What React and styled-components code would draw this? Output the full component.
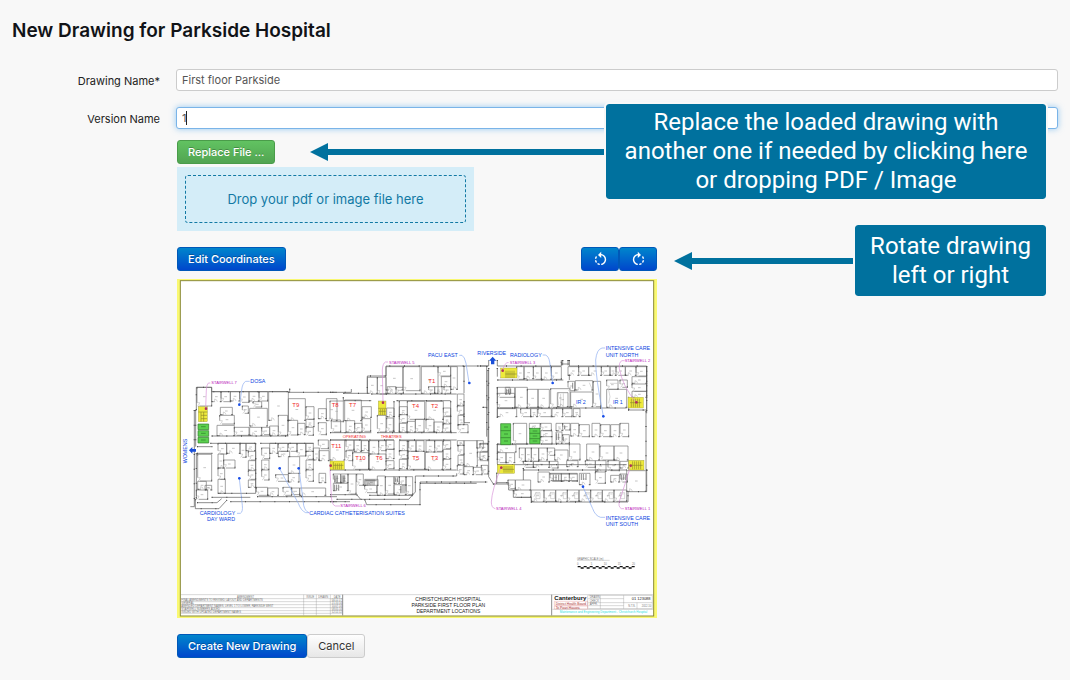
import React, { useState } from "react";
import styled, { createGlobalStyle } from "styled-components";
import { MdRotateLeft, MdRotateRight } from "react-icons/md";

// rooms are [x, y, width, height], three plan units to one pixel
const westRooms = [
  [60, 142, 44, 56],
  [104, 155, 28, 30],
  [132, 155, 28, 30],
  [160, 155, 28, 28],
  [188, 155, 28, 32],
  [216, 155, 30, 28],
  [246, 155, 26, 28],
  [275, 155, 59, 86],
  [228, 185, 26, 16],
  [130, 202, 36, 22],
  [128, 226, 44, 26],
  [120, 256, 52, 31],
  [172, 262, 44, 24],
  [218, 205, 53, 53],
  [196, 198, 18, 22],
  [218, 262, 36, 24],
  [254, 262, 24, 22],
  [278, 258, 26, 28],
  [304, 226, 28, 60],
  [334, 176, 51, 65],
  [334, 241, 28, 44],
  [362, 250, 22, 34],
  [387, 200, 24, 38],
  [387, 238, 24, 22],
  [387, 262, 22, 24],
  [424, 206, 24, 30],
  [424, 248, 24, 36],
  [448, 176, 32, 66],
  [62, 343, 42, 80],
  [62, 424, 26, 24],
  [58, 450, 34, 28],
  [84, 436, 20, 14],
  [123, 310, 26, 32],
  [149, 310, 40, 30],
  [189, 310, 18, 42],
  [207, 310, 28, 22],
  [140, 360, 34, 24],
  [123, 342, 17, 42],
  [123, 384, 20, 34],
  [123, 418, 22, 42],
  [214, 334, 22, 26],
  [214, 362, 22, 28],
  [214, 392, 22, 26],
  [214, 420, 22, 22],
  [254, 324, 24, 32],
  [254, 360, 22, 28],
  [254, 390, 22, 30],
  [278, 310, 24, 30],
  [304, 310, 28, 24],
  [304, 334, 34, 16],
  [334, 310, 26, 24],
  [334, 350, 34, 50],
  [360, 310, 26, 38],
  [387, 310, 22, 24],
  [387, 334, 22, 24],
  [387, 360, 22, 28],
  [387, 390, 22, 34],
  [409, 324, 18, 36],
  [296, 404, 38, 20],
  [334, 400, 32, 26],
  [238, 442, 34, 24],
  [272, 444, 32, 22],
  [318, 442, 26, 24],
  [368, 444, 78, 22],
  [344, 444, 24, 20],
  [426, 400, 20, 28],
  [424, 300, 30, 26],
  [426, 332, 30, 30],
];

const middleRooms = [
  [0, 183, 40, 62],
  [44, 180, 50, 62],
  [4, 240, 28, 36],
  [48, 242, 26, 34],
  [74, 250, 22, 26],
  [96, 200, 28, 32],
  [96, 236, 26, 38],
  [112, 112, 30, 48],
  [142, 112, 26, 50],
  [168, 80, 50, 70],
  [220, 80, 50, 72],
  [274, 80, 50, 80],
  [324, 80, 38, 28],
  [334, 110, 28, 30],
  [296, 140, 18, 20],
  [314, 140, 22, 20],
  [342, 140, 20, 20],
  [172, 140, 26, 20],
  [198, 142, 22, 18],
  [362, 80, 20, 68],
  [142, 226, 26, 50],
  [170, 204, 22, 26],
  [170, 234, 20, 40],
  [208, 200, 24, 24],
  [208, 224, 24, 24],
  [208, 250, 22, 26],
  [232, 184, 52, 54],
  [232, 244, 24, 32],
  [256, 238, 26, 38],
  [288, 184, 52, 54],
  [288, 238, 24, 38],
  [312, 246, 26, 30],
  [340, 204, 22, 24],
  [340, 230, 22, 20],
  [340, 252, 22, 24],
  [382, 162, 20, 34],
  [382, 198, 20, 26],
  [384, 226, 18, 28],
  [384, 254, 30, 24],
  [0, 300, 44, 60],
  [48, 300, 24, 30],
  [72, 300, 22, 34],
  [48, 332, 20, 30],
  [94, 302, 22, 30],
  [68, 338, 48, 50],
  [118, 302, 28, 40],
  [146, 302, 22, 30],
  [118, 342, 50, 46],
  [168, 300, 24, 28],
  [168, 328, 24, 28],
  [168, 362, 24, 24],
  [208, 302, 26, 30],
  [208, 332, 26, 24],
  [208, 358, 24, 28],
  [236, 302, 22, 32],
  [258, 302, 24, 32],
  [234, 334, 50, 54],
  [288, 302, 26, 34],
  [314, 302, 24, 32],
  [286, 336, 52, 52],
  [340, 302, 22, 24],
  [340, 328, 22, 28],
  [340, 358, 22, 30],
  [382, 302, 20, 14],
  [384, 316, 18, 28],
  [384, 346, 18, 28],
  [382, 376, 18, 26],
  [402, 380, 28, 24],
  [430, 382, 26, 22],
  [440, 302, 20, 22],
  [442, 336, 32, 26],
  [402, 302, 40, 76],
  [10, 402, 22, 26],
  [32, 402, 22, 26],
  [54, 402, 24, 60],
  [10, 430, 44, 22],
  [80, 402, 20, 34],
  [104, 418, 40, 18],
  [104, 436, 36, 22],
  [142, 408, 24, 58],
  [166, 410, 26, 52],
  [192, 410, 16, 20],
  [208, 410, 20, 26],
  [192, 434, 36, 30],
  [228, 410, 20, 54],
];

const eastRooms = [
  [110, 80, 22, 38],
  [132, 80, 28, 36],
  [160, 80, 24, 38],
  [184, 80, 30, 38],
  [214, 80, 30, 38],
  [264, 80, 32, 26],
  [296, 80, 30, 26],
  [326, 80, 38, 26],
  [364, 80, 26, 26],
  [390, 80, 18, 26],
  [408, 80, 28, 26],
  [436, 80, 32, 26],
  [468, 80, 32, 28],
  [456, 110, 44, 20],
  [456, 132, 44, 22],
  [456, 154, 44, 18],
  [52, 142, 52, 30],
  [76, 142, 14, 20],
  [52, 160, 52, 44],
  [106, 142, 36, 60],
  [142, 148, 32, 54],
  [174, 148, 34, 54],
  [212, 146, 58, 56],
  [232, 158, 32, 42],
  [264, 124, 20, 28],
  [286, 122, 52, 28],
  [340, 124, 22, 76],
  [272, 156, 66, 44],
  [380, 120, 34, 28],
  [380, 148, 60, 54],
  [420, 120, 22, 22],
  [52, 206, 58, 24],
  [122, 206, 30, 24],
  [152, 206, 20, 24],
  [174, 206, 40, 24],
  [216, 206, 32, 24],
  [248, 206, 28, 24],
  [280, 206, 20, 24],
  [182, 250, 32, 22],
  [182, 272, 34, 18],
  [182, 290, 34, 22],
  [148, 250, 32, 16],
  [100, 250, 40, 62],
  [228, 250, 20, 22],
  [248, 250, 22, 20],
  [228, 276, 18, 34],
  [248, 284, 20, 26],
  [272, 250, 24, 38],
  [298, 254, 30, 36],
  [336, 250, 24, 40],
  [362, 254, 28, 36],
  [392, 254, 26, 36],
  [420, 250, 26, 40],
  [52, 314, 56, 22],
  [52, 338, 26, 30],
  [78, 338, 26, 30],
  [118, 324, 18, 40],
  [136, 324, 18, 40],
  [154, 324, 22, 40],
  [176, 324, 26, 36],
  [202, 324, 22, 22],
  [224, 330, 40, 30],
  [268, 312, 32, 48],
  [320, 312, 38, 48],
  [360, 318, 42, 42],
  [402, 318, 42, 42],
  [130, 364, 30, 18],
  [160, 364, 48, 18],
  [208, 364, 26, 20],
  [260, 362, 34, 18],
  [316, 362, 30, 20],
  [346, 362, 32, 32],
  [384, 362, 34, 30],
  [420, 364, 26, 20],
  [210, 400, 34, 24],
  [244, 400, 24, 24],
  [268, 400, 24, 24],
  [298, 400, 32, 34],
  [346, 396, 30, 34],
  [392, 406, 26, 20],
  [420, 402, 22, 24],
  [174, 396, 34, 30],
  [84, 420, 22, 26],
  [106, 420, 46, 30],
  [102, 450, 50, 22],
  [154, 450, 38, 34],
  [192, 450, 35, 34],
  [227, 450, 35, 34],
  [262, 450, 35, 34],
  [297, 450, 35, 34],
  [332, 450, 35, 34],
  [367, 450, 35, 34],
  [402, 450, 38, 34],
  [440, 392, 58, 62],
  [0, 310, 24, 24],
  [0, 336, 24, 22],
  [4, 376, 20, 26],
];

const bays = [162, 206, 244, 278, 312, 348, 382, 416];

const roomWalls = (rooms) =>
  rooms
    .map(([x, y, w, h], i) =>
      i % 2
        ? `M${x + 9} ${y + h}H${x}V${y}H${x + w}V${y + h}H${x + w - 4}`
        : `M${x} ${y + h - 10}V${y}H${x + w}V${y + h}H${x + 7}`
    )
    .join("");

const roomDoors = (rooms) =>
  rooms
    .map(([x, y, w, h], i) =>
      i % 2
        ? `M${x + 9} ${y + h}v-8q7 1 8 8`
        : `M${x} ${y + h - 10}h8q-1 8 -7 10`
    )
    .join("");

const roomTags = (rooms) =>
  rooms
    .map(([x, y, w, h]) => `M${x + w / 2 - 4} ${y + h / 2}h8`)
    .join("");

const roomPosts = (rooms) =>
  rooms
    .map(([x, y, w, h], i) =>
      i % 2
        ? `M${x - 1} ${y + h}h5M${x + w - 3} ${y + h}h5`
        : `M${x + w} ${y + h - 4}v6M${x} ${y - 1}v5`
    )
    .join("");

const Rooms = ({ rooms }) => (
  <>
    <Wall d={roomWalls(rooms)} />
    <Door d={roomDoors(rooms)} />
    <Tag d={roomTags(rooms)} />
    <Post d={roomPosts(rooms)} />
  </>
);

const Shell = ({ d }) => (
  <>
    <Outer d={d} />
    <Columns d={d} />
  </>
);

const WestWing = () => (
  <g>
    <Rooms rooms={westRooms} />
    <Shell d="M58 210V142H104V155H334M334 157H480M338 146V157M52 210V500H40M56 210V320M58 340V478M55 478V506H126L150 480M60 488H120L134 476M104 472H220M160 485H480M240 470H480M100 310H236M250 310H410M104 288H334M60 320H106M60 340H106M236 310V460H123" />
    <Stair x="64" y="200" width="27" height="45" />
    <StairLine d="M64 216h27M72 216v29M80 216v29M72 226h18M72 236h18" />
    <Lift d="M63 252h32v17h-32zM63 272h32v17h-32zM63 292h32v17h-32z" />
    <LiftLine d="M63 252h32v17h-32zM63 272h32v17h-32zM63 292h32v17h-32zM72 260h14M72 280h14M72 300h14" />
    <Leader d="M218 124H206Q196 130 194 150L188 194M180 520H190Q198 516 196 496L187 416M396 518H386Q372 512 364 490L308 386M396 518Q384 514 380 496L366 386" />
    <StairLeader d="M100 129H94Q89 134 88 150L86 204" />
    <Dot cx="187" cy="194" r="4" />
    <Dot cx="187" cy="415" r="4" />
    <Dot cx="308" cy="385" r="4" />
    <Dot cx="365" cy="385" r="4" />
    <StairDot cx="87" cy="206" r="4" />
    <Arrow d="M36 331l10-10v6h11v8h-11v6z" />
    <Department x="220" y="129">DOSA</Department>
    <Department x="68" y="525">CARDIOLOGY</Department>
    <Department x="90" y="543">DAY WARD</Department>
    <Department x="0" y="0" transform="translate(31 370) rotate(-90)">
      WOMENS
    </Department>
    <Stairwell x="103" y="133">STAIRWELL 7</Stairwell>
    <Theatre x="346" y="200">T9</Theatre>
  </g>
);

const MiddleWing = () => (
  <g transform="translate(459 0)">
    <Rooms rooms={middleRooms} />
    <Shell d="M0 157H64V147M40 160H112V108H168V78H474M402 78V160M402 184V248H420M470 78V202H456M470 202V290M124 162H380M40 172V182H124M200 182H362M0 278H124M142 278H380M0 300H116M118 300H192M208 300H380M0 390H116M118 390H380M0 464H80M80 464L92 478H236L256 456V408H380V400M0 485H60M104 478L110 494H270V426H472M20 478H96M118 466H248M270 430H440M362 184V278M208 184V278M192 184V278M116 302V390M232 302V390" />
    <Hatch d="M14 406v22M18 406v22M22 406v22M36 406v22M40 406v22M44 406v22M106 422h34M108 418v18M114 418v18M120 418v18M126 418v18M132 418v18M196 412v14M202 412v14M212 438v22M216 438v22M222 438v22M14 434v18M20 434v18M26 434v18" />
    <Stair x="145" y="183" width="23" height="42" />
    <StairLine d="M145 205h23M151 207v18M157 207v18M163 207v18M147 214h20" />
    <Stair x="0" y="363" width="43" height="26" />
    <StairLine d="M10 366v22M16 370v18M22 370v18M28 370v18M34 370v18M10 376h30" />
    <StairLeader d="M174 66H166Q158 70 157 90L159 188M0 388L4 470Q6 496 16 498H30" />
    <Leader d="M388 46H396Q404 50 408 70L417 128" />
    <Dot cx="418" cy="129" r="4" />
    <StairDot cx="159" cy="188" r="4" />
    <StairDot cx="2" cy="377" r="4" />
    <Department x="294" y="51">PACU EAST</Department>
    <Department x="-62" y="525">CARDIAC CATHETERISATION SUITES</Department>
    <Stairwell x="177" y="71">STAIRWELL 5</Stairwell>
    <Stairwell x="31" y="502">STAIRWELL 6</Stairwell>
    <Theatre x="5" y="202">T8</Theatre>
    <Theatre x="57" y="202">T7</Theatre>
    <Theatre x="246" y="205">T4</Theatre>
    <Theatre x="303" y="205">T2</Theatre>
    <Theatre x="295" y="129">T1</Theatre>
    <Theatre x="4" y="324">T11</Theatre>
    <Theatre x="76" y="359">T10</Theatre>
    <Theatre x="137" y="359">T6</Theatre>
    <Theatre x="247" y="359">T5</Theatre>
    <Theatre x="303" y="359">T3</Theatre>
    <Suite x="38" y="294">OPERATING</Suite>
    <Suite x="152" y="294">THEATRES</Suite>
  </g>
);

const EastWing = () => (
  <g transform="translate(909 0)">
    <Rooms rooms={eastRooms} />
    <Shell d="M0 78H26V60M52 60V78H244V60M268 60V78H500V210M248 60V76M264 60V76M244 72H268M500 78V220M498 214V390H504M500 390V455H444V486H154V472H100V450H86V428H50M26 84V410L40 432H84M52 84V110M52 120H250M52 142V234M52 204H440M444 210H498M52 312H268M24 312H0M52 312V372M52 374H440M130 390H440M24 90V330M446 210V170M268 104V120M130 384V420M50 398V432" />
    <Hatch d="M212 402h80M212 422h80M220 404v18M228 404v18M236 404v18M80 146v14M86 146v14M92 146v14M304 402v18M310 402v18M318 402v18M424 404v16M430 404v16M436 404v16M278 128v18M230 280v20M236 280v20M254 256v12M250 290v14" />
    <Thin d="M236 158Q230 172 236 196M242 162v36M250 160v40M328 128l10 24M390 130h22M386 150q8 20 0 40" />
    <Stair x="62" y="84" width="49" height="30" />
    <StairLine d="M78 92v22M84 92v22M90 92v22M96 92v22M102 92v22M76 102h34" />
    <Stair x="444" y="172" width="46" height="32" />
    <StairLine d="M454 176v26M460 176v26M466 176v26M472 176v26M478 176v26M450 188h34" />
    <Stair x="52" y="374" width="52" height="26" />
    <StairLine d="M72 378v20M78 378v20M84 378v20M90 378v20M96 378v20M68 388h34" />
    <Stair x="446" y="361" width="46" height="29" />
    <StairLine d="M458 364v24M464 364v24M470 364v24M476 364v24M482 364v24M452 376h36" />
    <Lift d="M62 251h30v63h-30zM149 265h31v46h-31z" />
    <LiftLine d="M62 251h30v63h-30zM62 272h30M62 293h30M149 265h31v46h-31zM149 280h31M149 296h31M72 261h12M72 282h12M72 303h12M158 273h14M158 288h14M158 303h14" />
    {bays.map((x) => (
      <Thin
        key={x}
        d={`M${x + 6} 458h12v18h-12zM${x} 470q6-14 6-14M${x + 9} 462h6`}
      />
    ))}
    <Leader d="M188 45H196Q206 48 209 66L218 128M375 24H366Q350 28 347 60Q346 110 370 228M375 532H362Q346 528 338 506L309 441" />
    <StairLeader d="M86 68H80Q72 74 68 90M434 62H426Q416 66 418 86Q428 140 468 186M46 506Q34 504 34 486Q36 450 62 384M432 506H424Q414 500 418 484Q436 430 452 378" />
    <Dot cx="218" cy="129" r="4" />
    <Dot cx="370" cy="229" r="4" />
    <Dot cx="309" cy="440" r="4" />
    <StairDot cx="68" cy="92" r="4" />
    <StairDot cx="469" cy="187" r="4" />
    <StairDot cx="64" cy="383" r="4" />
    <StairDot cx="452" cy="377" r="4" />
    <Arrow d="M38 50l11 12h-6v11h-10v-11h-6z" />
    <Department x="-8" y="44">RIVERSIDE</Department>
    <Department x="90" y="51">RADIOLOGY</Department>
    <Department x="377" y="31">INTENSIVE CARE</Department>
    <Department x="377" y="50">UNIT NORTH</Department>
    <Department x="377" y="539">INTENSIVE CARE</Department>
    <Department x="377" y="558">UNIT SOUTH</Department>
    <Department x="288" y="192">IR 2</Department>
    <Department x="399" y="192">IR 1</Department>
    <Stairwell x="89" y="72">STAIRWELL 3</Stairwell>
    <Stairwell x="434" y="66">STAIRWELL 2</Stairwell>
    <Stairwell x="48" y="511">STAIRWELL 4</Stairwell>
    <Stairwell x="434" y="511">STAIRWELL 1</Stairwell>
  </g>
);

const TitleBlock = () => (
  <g>
    <g transform="translate(669 600)">
      <Note x="531" y="59">GRAPHIC SCALE (m)</Note>
      <Thin d="M531 61h98" />
      <Note x="531" y="75">0</Note>
      <Note x="572" y="75">5</Note>
      <Note x="611" y="75">10</Note>
      <Note x="653" y="75">15</Note>
      <Note x="696" y="75">20</Note>
      <ScaleBar d="M533 80h9M551 80h9M569 80h9M587 80h9M605 80h9M623 80h9M641 80h9M659 80h9M677 80h9M695 80h9M542 84h9M560 84h9M578 84h9M596 84h9M614 84h9M632 84h9M650 84h9M668 84h9M686 84h9" />
    </g>
    <Thin d="M10 764H1430" />
    <Thin d="M10 776H496M10 785H496M10 794H496M10 803H496M10 812H496M10 820H496M380 764V826M418 764V826M460 764V826" />
    <Outer d="M497 764V826M1124 764V826" />
    <Note x="180" y="773">AMENDMENT</Note>
    <Note x="388" y="773">ISSUE</Note>
    <Note x="424" y="773">DRAWN</Note>
    <Note x="470" y="773">DATE</Note>
    <Note x="13" y="783">FINAL AMENDMENTS TO REVISED LAYOUT AND DEPARTMENTS</Note>
    <Note x="13" y="792">GENERAL</Note>
    <Note x="13" y="801">
      AMENDED DEPARTMENT NAMES, LEVEL 1 TO LOWER, PARKSIDE WEST
    </Note>
    <Note x="13" y="810">STAIRWELL NUMBERS ADDED</Note>
    <Note x="13" y="819">ISSUED WITH UPDATED DEPARTMENT NAMES</Note>
    <Note x="464" y="783">04.12.17</Note>
    <Note x="464" y="792">21.10.14</Note>
    <Note x="464" y="801">10.07.14</Note>
    <Note x="464" y="810">08.05.14</Note>
    <Note x="464" y="819">12.12.12</Note>
    <SheetName x="814" y="783">CHRISTCHURCH HOSPITAL</SheetName>
    <SheetName x="814" y="802">PARKSIDE FIRST FLOOR PLAN</SheetName>
    <SheetName x="814" y="820">DEPARTMENT LOCATIONS</SheetName>
    <Thin d="M1232 766V806M1234 766H1426V806H1234M1340 766V806M1234 776H1340M1234 788H1426M1234 797H1340M1270 766V806M1380 788V806M1126 808H1428" />
    <Board x="1132" y="779">Canterbury</Board>
    <BoardBox d="M1132 784h100v12h-100zM1132 798h100v9h-100z" />
    <BoardNote x="1136" y="794">District Health Board</BoardNote>
    <BoardNote x="1136" y="806">Te Poari Hauora</BoardNote>
    <SheetNo x="1364" y="780">01 123088</SheetNo>
    <Note x="1354" y="800">N.T.S.</Note>
    <Note x="1394" y="800">2012.10</Note>
    <Note x="1238" y="774">DRAWN</Note>
    <Note x="1238" y="785">CHECK</Note>
    <Note x="1238" y="796">APPR.</Note>
    <Engineering x="1148" y="820">
      Maintenance and Engineering Department - Christchurch Hospital
    </Engineering>
  </g>
);

const App = () => {
  const [formData, setFormData] = useState({
    drawing: "First floor Parkside",
    version: "1",
  });

  return (
    <>
      <GlobalStyle />
      <Page>
        <Heading>New Drawing for Parkside Hospital</Heading>
        <Form onSubmit={(e) => e.preventDefault()}>
          <Field>
            <Label htmlFor="drawing">Drawing Name*</Label>
            <StyledInput
              id="drawing"
              type="text"
              value={formData.drawing}
              onChange={(e) =>
                setFormData({ ...formData, drawing: e.target.value })
              }
            />
          </Field>
          <Field>
            <Label htmlFor="version">Version Name</Label>
            <InputHolder>
              <StyledInput
                id="version"
                type="text"
                $active
                value={formData.version}
                onChange={(e) =>
                  setFormData({ ...formData, version: e.target.value })
                }
              />
              <Caret />
            </InputHolder>
          </Field>
          <Body>
            <Button type="button" $kind="success">
              Replace File ...
            </Button>
            <DropZone>
              <DropTarget>Drop your pdf or image file here</DropTarget>
            </DropZone>
            <Toolbar>
              <Button type="button" $kind="primary">
                Edit Coordinates
              </Button>
              <ButtonGroup>
                <IconButton
                  type="button"
                  $kind="primary"
                  aria-label="Rotate left"
                >
                  <MdRotateLeft size={17} />
                </IconButton>
                <IconButton
                  type="button"
                  $kind="primary"
                  aria-label="Rotate right"
                >
                  <MdRotateRight size={17} />
                </IconButton>
              </ButtonGroup>
            </Toolbar>
            <Sheet>
              <Plan viewBox="0 -183 1440 1017">
                <Paper x="10" y="-178" width="1420" height="1006" />
                <WestWing />
                <MiddleWing />
                <EastWing />
                <TitleBlock />
              </Plan>
            </Sheet>
            <Actions>
              <Button type="submit" $kind="primary">
                Create New Drawing
              </Button>
              <Button type="button">Cancel</Button>
            </Actions>
          </Body>
        </Form>
        <Hint $top={102} $left={310}>
          <Pointer />
          <Bubble $width={440}>
            Replace the loaded drawing with another one if needed by clicking
            here or dropping PDF / Image
          </Bubble>
        </Hint>
        <Hint $top={223} $left={674}>
          <Pointer />
          <Bubble $width={191}>Rotate drawing left or right</Bubble>
        </Hint>
      </Page>
    </>
  );
};

export default App;

const GlobalStyle = createGlobalStyle`
  * {
    box-sizing: border-box;
  }
  body {
    margin: 0;
    background: #f8f8f8;
    font-family: Inter, "Liberation Sans", sans-serif;
    font-size: 13px;
    color: #222;
  }
`;

const Page = styled.main`
  position: relative;
  min-height: 100vh;
  padding: 19px 12px 20px;
`;
const Heading = styled.h1`
  margin: 0 0 26px;
  font-size: 19px;
  line-height: 24px;
  font-weight: 600;
  color: #111317;
`;
const Form = styled.form`
  display: flex;
  flex-direction: column;
`;
const Field = styled.div`
  display: grid;
  grid-template-columns: 148px 1fr;
  column-gap: 16px;
  margin-bottom: 16px;
`;
const Label = styled.label`
  padding-top: 3px;
  font-size: 11px;
  line-height: 18px;
  text-align: right;
`;
const InputHolder = styled.div`
  position: relative;
`;
const StyledInput = styled.input`
  display: block;
  width: 100%;
  height: 22px;
  padding: 0 5px;
  border: 1px solid ${(props) => (props.$active ? "#7ab4e8" : "#ccc")};
  border-radius: 3px;
  outline: none;
  background: #fff;
  box-shadow: ${(props) =>
    props.$active ? "0 0 6px rgba(82, 168, 236, 0.6)" : "none"};
  font-family: inherit;
  font-size: 11px;
  color: #555;
`;
const Caret = styled.span`
  position: absolute;
  top: 4px;
  left: 10px;
  width: 1px;
  height: 14px;
  background: #222;
`;

const Body = styled.div`
  display: flex;
  flex-direction: column;
  align-items: flex-start;
  padding: 0 0 0 165px;
  margin-top: -5px;
`;
const buttonColors = {
  primary: {
    text: "#fff",
    fill: "linear-gradient(#0088cc, #0044cc)",
    border: "#0058b8",
    shadow: "0 -1px 0 rgba(0, 0, 0, 0.25)",
    weight: 500,
  },
  success: {
    text: "#fff",
    fill: "linear-gradient(#62c462, #51a351)",
    border: "#4a9c4a",
    shadow: "0 -1px 0 rgba(0, 0, 0, 0.25)",
    weight: 500,
  },
  plain: {
    text: "#333",
    fill: "linear-gradient(#fff, #e6e6e6)",
    border: "#ccc",
    shadow: "0 1px 1px rgba(255, 255, 255, 0.75)",
    weight: 400,
  },
};
const Button = styled.button`
  display: inline-flex;
  align-items: center;
  justify-content: center;
  height: 24px;
  padding: 0 10px;
  border: 1px solid
    ${(props) => buttonColors[props.$kind || "plain"].border};
  border-radius: 3px;
  background: ${(props) => buttonColors[props.$kind || "plain"].fill}
    border-box;
  color: ${(props) => buttonColors[props.$kind || "plain"].text};
  text-shadow: ${(props) => buttonColors[props.$kind || "plain"].shadow};
  font-family: inherit;
  font-size: 11px;
  font-weight: ${(props) => buttonColors[props.$kind || "plain"].weight};
  white-space: nowrap;
  cursor: pointer;
`;
const IconButton = styled(Button)`
  width: 38px;
  padding: 0;
`;
const DropZone = styled.div`
  width: 297px;
  max-width: 100%;
  margin-top: 3px;
  padding: 8px;
  background: #d4edf8;
`;
const DropTarget = styled.div`
  padding: 14px 0;
  border: 1px dashed #1279a4;
  border-radius: 3px;
  line-height: 18px;
  text-align: center;
  color: #1279a4;
`;
const Toolbar = styled.div`
  display: flex;
  justify-content: space-between;
  width: 480px;
  max-width: 100%;
  margin: 16px 0 8px;
`;
const ButtonGroup = styled.div`
  display: flex;
`;
const Actions = styled.div`
  display: flex;
  margin-top: 16px;
`;

const Sheet = styled.div`
  width: 480px;
  max-width: 100%;
  background: #f9f871;
`;
const Plan = styled.svg`
  display: block;
  width: 100%;
  font-family: "Liberation Sans", Arial, sans-serif;
`;
const Paper = styled.rect`
  fill: #fff;
  stroke: #8a8a3a;
  stroke-width: 3;
`;
const Wall = styled.path`
  fill: none;
  stroke: #747474;
  stroke-width: 2;
`;
const Outer = styled.path`
  fill: none;
  stroke: #555;
  stroke-width: 2;
`;
const Columns = styled.path`
  fill: none;
  stroke: #555;
  stroke-width: 4;
  stroke-dasharray: 3 41;
`;
const Post = styled.path`
  fill: none;
  stroke: #444;
  stroke-width: 2;
`;
const Door = styled.path`
  fill: none;
  stroke: #888;
  stroke-width: 1;
`;
const Tag = styled.path`
  stroke: #aaa;
  stroke-width: 2;
`;
const Thin = styled.path`
  fill: none;
  stroke: #888;
  stroke-width: 1;
`;
const Hatch = styled.path`
  stroke: #555;
  stroke-width: 2;
`;
const Stair = styled.rect`
  fill: #eeea3c;
  stroke: #8a8630;
  stroke-width: 1;
`;
const StairLine = styled.path`
  fill: none;
  stroke: #8f8a2a;
  stroke-width: 2;
`;
const Lift = styled.path`
  fill: #5bd04e;
`;
const LiftLine = styled.path`
  fill: none;
  stroke: #2f7a2a;
  stroke-width: 2;
`;
const Leader = styled.path`
  fill: none;
  stroke: #8aabf0;
  stroke-width: 2;
`;
const StairLeader = styled.path`
  fill: none;
  stroke: #d890d8;
  stroke-width: 2;
`;
const Dot = styled.circle`
  fill: #1a4fe8;
`;
const StairDot = styled.circle`
  fill: #b0305c;
`;
const Arrow = styled.path`
  fill: #1a4fd8;
`;
const Department = styled.text`
  fill: #0a3fe0;
  font-size: 16px;
`;
const Stairwell = styled.text`
  fill: #b818b8;
  font-size: 12px;
`;
const Theatre = styled.text`
  fill: #f02a2a;
  font-size: 18px;
`;
const Suite = styled.text`
  fill: #f02a2a;
  font-size: 12px;
`;
const Note = styled.text`
  fill: #777;
  font-size: 8px;
`;
const ScaleBar = styled.path`
  stroke: #111;
  stroke-width: 4;
`;
const SheetName = styled.text`
  fill: #222;
  font-size: 15px;
  text-anchor: middle;
`;
const SheetNo = styled.text`
  fill: #222;
  font-size: 12px;
`;
const Board = styled.text`
  fill: #111;
  font-size: 18px;
  font-weight: 700;
`;
const BoardBox = styled.path`
  fill: none;
  stroke: #e08080;
  stroke-width: 1;
`;
const BoardNote = styled.text`
  fill: #a33;
  font-size: 10px;
`;
const Engineering = styled.text`
  fill: #30dede;
  font-size: 9px;
`;

const Hint = styled.aside`
  position: absolute;
  top: ${(props) => props.$top}px;
  left: ${(props) => props.$left}px;
  right: 22px;
  display: flex;
  align-items: center;
  pointer-events: none;
`;
const Pointer = styled.div`
  flex: 1;
  display: flex;
  align-items: center;
  &::before {
    content: "";
    border: 9px solid transparent;
    border-left: 0;
    border-right: 18px solid #00719e;
  }
  &::after {
    content: "";
    flex: 1;
    height: 6px;
    background: #00719e;
  }
`;
const Bubble = styled.div`
  display: flex;
  align-items: center;
  justify-content: center;
  width: ${(props) => props.$width + 4}px;
  min-height: 75px;
  padding: 4px 10px;
  border: 2px solid #f8f8f8;
  border-radius: 5px;
  background: #00719e;
  background-clip: padding-box;
  font-family: Roboto, "Liberation Sans", sans-serif;
  font-size: 24px;
  line-height: 29px;
  text-align: center;
  color: #fff;
`;
